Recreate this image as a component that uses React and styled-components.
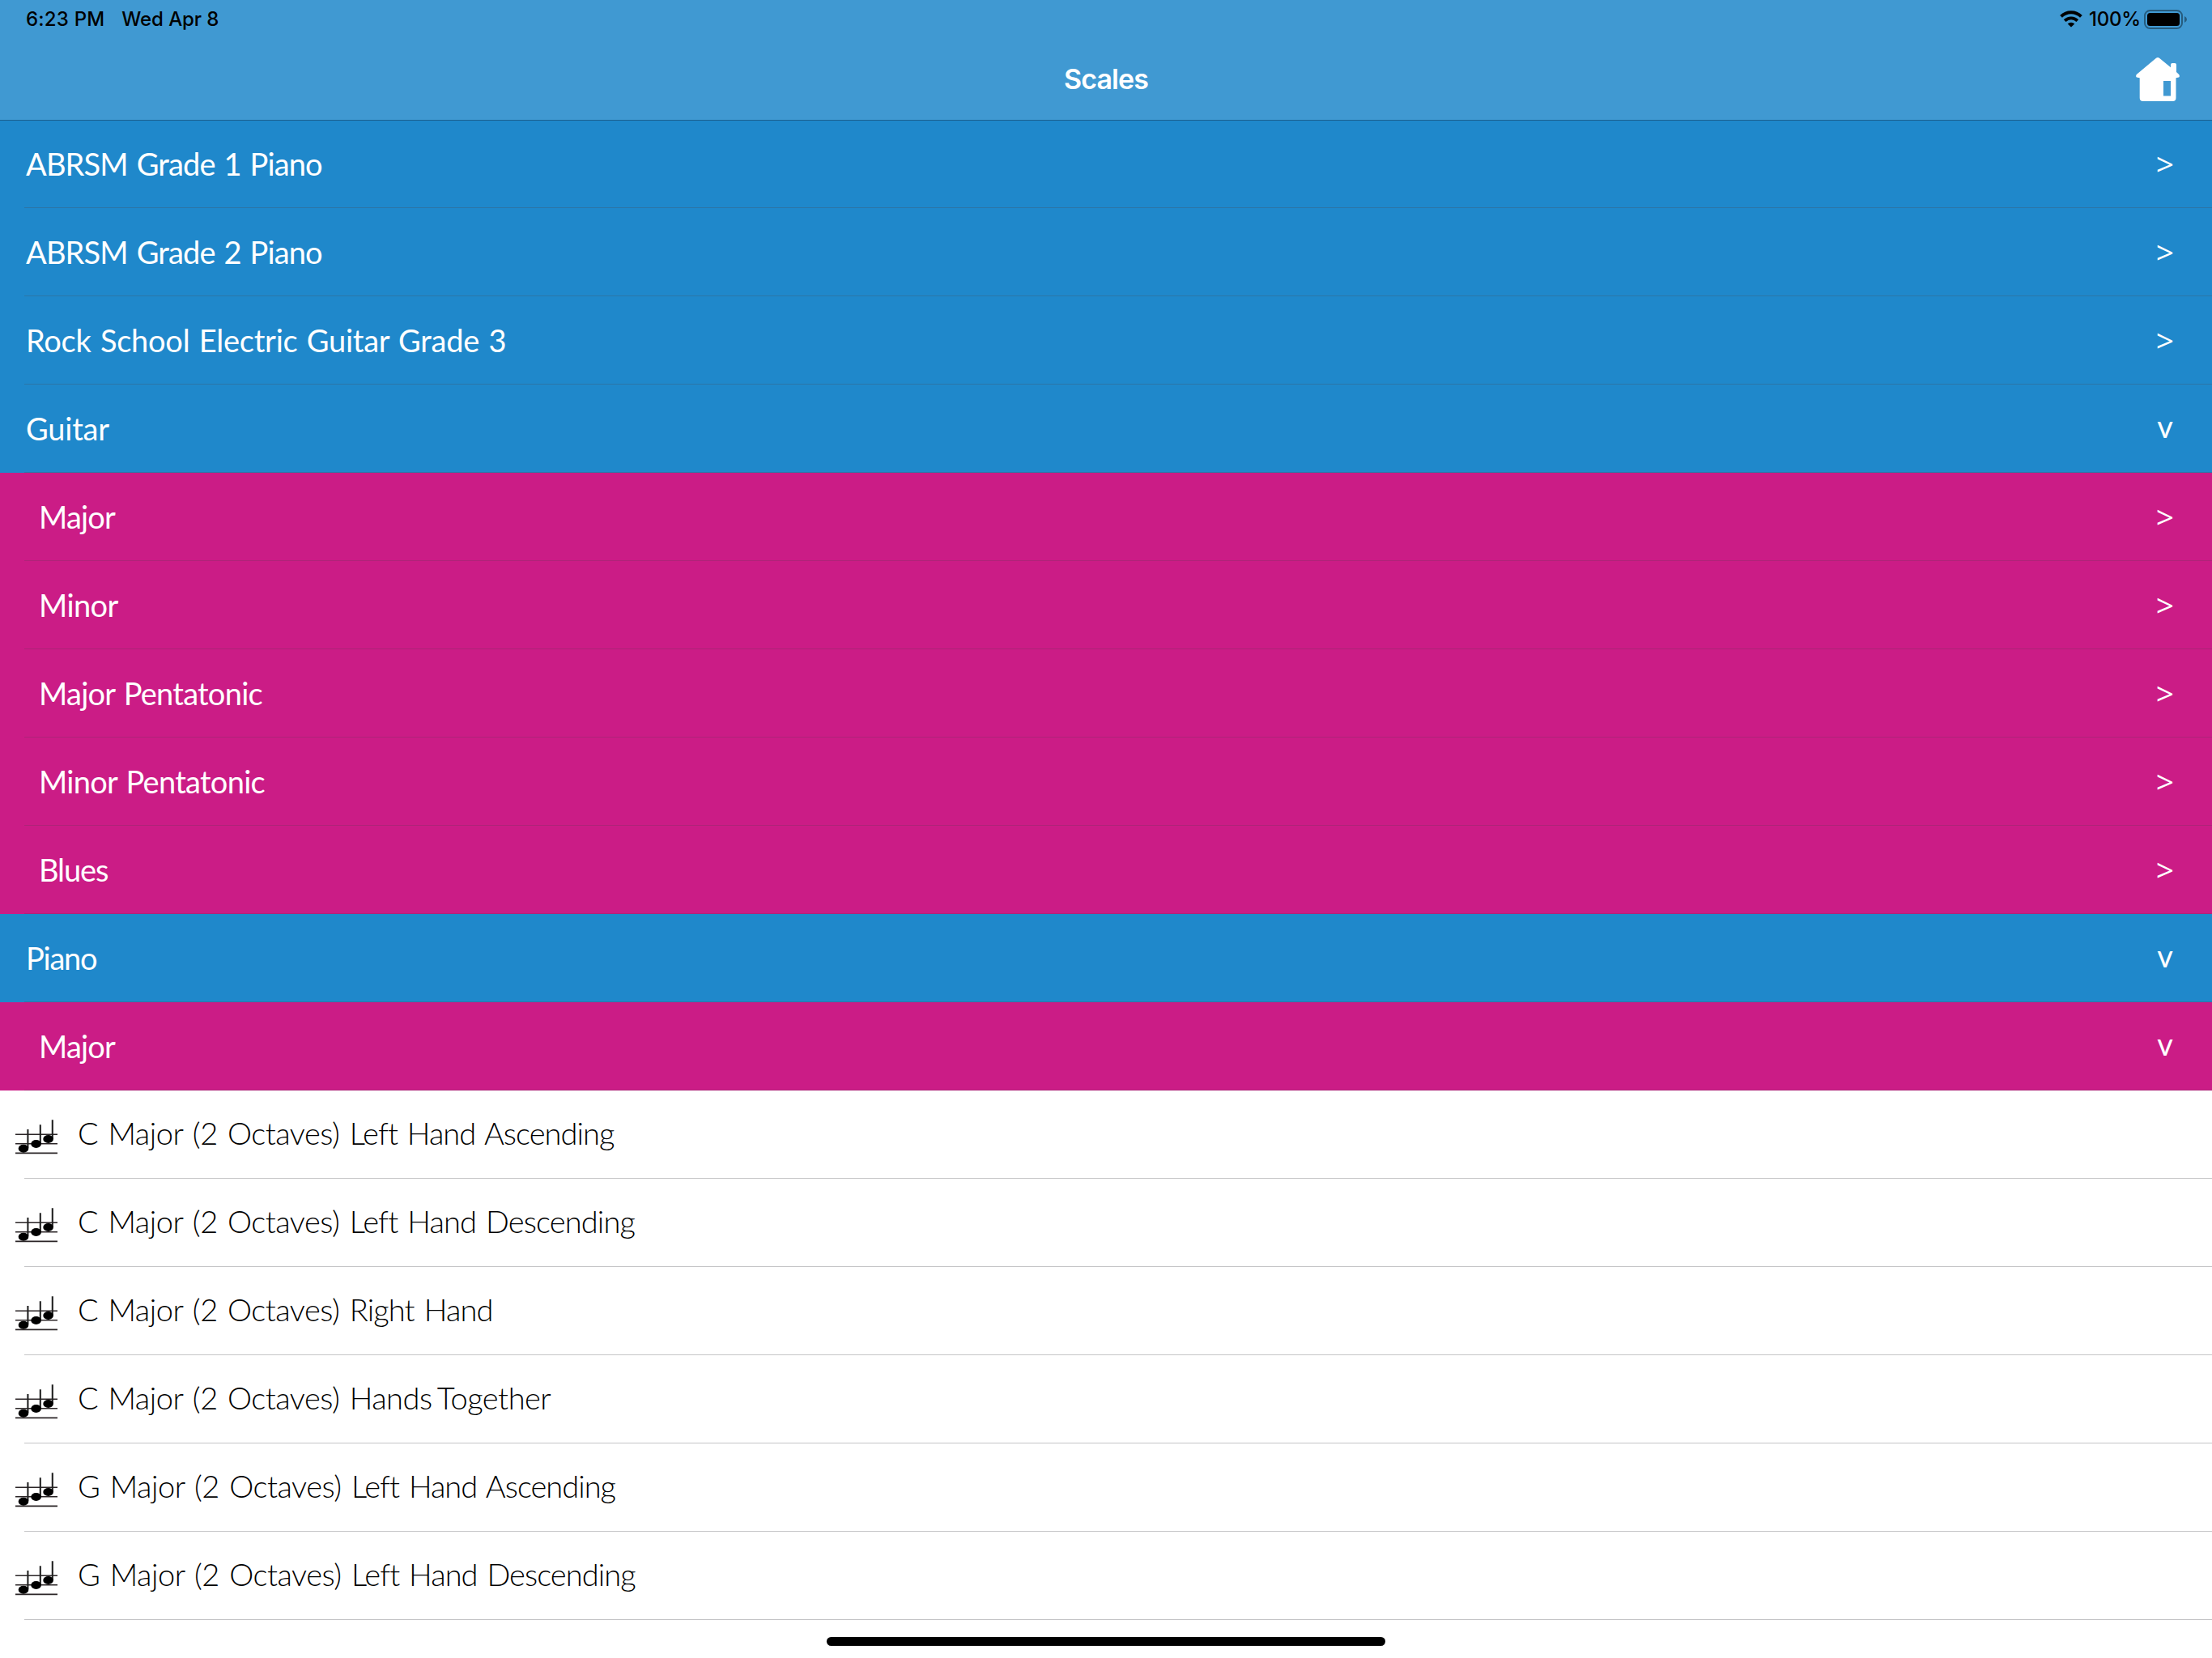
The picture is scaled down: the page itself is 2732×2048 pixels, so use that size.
import React from "react";
import styled, { createGlobalStyle } from "styled-components";

const GlobalStyle = createGlobalStyle`
  *, *::before, *::after { box-sizing: border-box; }
  html, body { margin: 0; height: 100%; background: #fff; }
  body { overflow: hidden; }
`;

const Screen = styled.div`
  display: flex;
  flex-direction: column;
  width: 100%;
  height: 2048px;
  overflow: hidden;
  background: #fff;
  font-family: Lato, "Open Sans", sans-serif;
`;

const Header = styled.header`
  display: flex;
  flex-direction: column;
  flex: none;
  height: 149px;
  margin-bottom: -1px;
  z-index: 1;
  background: #4099d2;
  border-bottom: 1px solid #1b608f;
  font-family: Inter, "Liberation Sans", sans-serif;
`;

const StatusBar = styled.div`
  display: flex;
  flex: none;
  justify-content: space-between;
  align-items: center;
  height: 47px;
  padding: 0 30px 0 32px;
  color: #000;
  font-size: 24px;
  font-weight: 500;
`;

const StatusGroup = styled.div`
  display: flex;
  align-items: center;
  gap: ${(p) => p.$gap}px;
`;

const StatusText = styled.span`
  letter-spacing: ${(p) => p.$tracking || 0}px;
  line-height: 29px;
  white-space: nowrap;
`;

const StatusIcons = styled.svg`
  display: block;
`;

const NavBar = styled.div`
  display: grid;
  flex: none;
  grid-template-columns: 1fr auto 1fr;
  align-items: center;
  height: 100px;
  padding: 0 40px;
`;

const Title = styled.h1`
  grid-column: 2;
  margin: 0;
  color: #fff;
  font-size: 34px;
  font-weight: 600;
  line-height: 102px;
  letter-spacing: -0.9px;
`;

const HomeButton = styled.button`
  justify-self: end;
  display: block;
  width: 54px;
  height: 54px;
  padding: 0;
  border: 0;
  background: none;
`;

const List = styled.ul`
  margin: 0;
  padding: 0;
  list-style: none;
`;

const tones = {
  section: { bg: "#1f88cb", fg: "#fff", line: "#2b76a7", weight: 400, indent: 32, leading: 109 },
  group: { bg: "#cb1c86", fg: "#fff", line: "#ae2378", weight: 400, indent: 48, leading: 109 },
  item: { bg: "#fff", fg: "#000", line: "#c5c5c7", weight: 300, indent: 19, leading: 105 },
};

const Row = styled.li`
  display: flex;
  align-items: center;
  height: 109px;
  padding: 0 48px 0 ${(p) => tones[p.$tone].indent}px;
  color: ${(p) => tones[p.$tone].fg};
  background:
    linear-gradient(${(p) => tones[p.$tone].line}, ${(p) => tones[p.$tone].line})
      30px 100% / 100% 1px no-repeat,
    ${(p) => tones[p.$tone].bg};
  font-size: 38px;
  font-weight: ${(p) => tones[p.$tone].weight};
  line-height: ${(p) => tones[p.$tone].leading}px;
`;

const Label = styled.span`
  flex: 1;
  height: 109px;
  white-space: nowrap;
`;

const Phrase = styled.span`
  letter-spacing: ${(p) => p.$tracking}px;
  word-spacing: ${(p) => p.$wordGap}px;
`;

const Disclosure = styled.span`
  width: 20px;
  height: 109px;
  display: flex;
  justify-content: center;
  line-height: ${(p) => (p.$open ? 102 : 107)}px;
  font-family: ${(p) => (p.$open ? "Lato" : '"Open Sans"')}, sans-serif;
  font-size: ${(p) => (p.$open ? 38 : 39)}px;
`;

const NotesIcon = styled.svg`
  flex: none;
  width: 52px;
  height: 44px;
  margin: 4px 25px 0 0;
`;

const HomeIndicator = styled.div`
  position: absolute;
  left: 1021px;
  top: 2022px;
  width: 690px;
  height: 11px;
  border-radius: 6px;
  background: #000;
`;

const rows = [
  { tone: "section", text: "ABRSM Grade 1 Piano", tracking: -0.85, wordGap: 2 },
  { tone: "section", text: "ABRSM Grade 2 Piano", tracking: -0.85, wordGap: 2 },
  { tone: "section", text: "Rock School Electric Guitar Grade 3", tracking: -0.26, wordGap: 2 },
  { tone: "section", text: "Guitar", tracking: -0.2, open: true },
  { tone: "group", text: "Major", tracking: -0.8 },
  { tone: "group", text: "Minor", tracking: -0.6 },
  { tone: "group", text: "Major Pentatonic", tracking: -0.73, wordGap: 2 },
  { tone: "group", text: "Minor Pentatonic", tracking: -0.7, wordGap: 2 },
  { tone: "group", text: "Blues", tracking: -1.1 },
  { tone: "section", text: "Piano", tracking: -1.2, open: true },
  { tone: "group", text: "Major", tracking: -0.8, open: true },
  { tone: "item", scale: "C Major (2 Octaves) ", text: "Left Hand Ascending", tracking: -0.95, wordGap: 2.5 },
  { tone: "item", scale: "C Major (2 Octaves) ", text: "Left Hand Descending", tracking: -0.86, wordGap: 2.5 },
  { tone: "item", scale: "C Major (2 Octaves) ", text: "Right Hand", tracking: -0.85, wordGap: 2.5 },
  { tone: "item", scale: "C Major (2 Octaves) ", text: "Hands Together", tracking: -0.5, wordGap: -2.5 },
  { tone: "item", scale: "G Major (2 Octaves) ", text: "Left Hand Ascending", tracking: -0.98, wordGap: 2.5 },
  { tone: "item", scale: "G Major (2 Octaves) ", text: "Left Hand Descending", tracking: -0.94, wordGap: 2.5 },
];

const Wifi = () => (
  <StatusIcons width="28" height="21" viewBox="0 0 28 21">
    <g fill="none" stroke="#000" strokeWidth="3.9">
      <path d="M1.6 7.4 A17.5 17.5 0 0 1 26.4 7.4" />
      <path d="M6.2 12.6 A11 11 0 0 1 21.8 12.6" />
    </g>
    <path d="M14 20.5 L9.7 16.4 A6.2 6.2 0 0 1 18.3 16.4 Z" />
  </StatusIcons>
);

const Battery = () => (
  <StatusIcons width="54" height="24" viewBox="0 0 54 24">
    <rect x="1" y="1" width="46" height="22" rx="6.5" fill="none" stroke="#265c7e" strokeWidth="2" />
    <rect x="4" y="4" width="40" height="16" rx="3.5" />
    <path d="M50 8 Q53 9.5 53 12 Q53 14.5 50 16 Z" fill="#265c7e" />
  </StatusIcons>
);

const House = () => (
  <svg width="54" height="54" viewBox="0 0 54 54" fill="#fff">
    <path
      fillRule="evenodd"
      d="M25 .8 Q27 -.7 29 .8 L43 12.3 V9 Q43 7 45 7 H48 Q50 7 50 9 V18 L53.2 21 Q54.6 23.2 53 24.6 L49.5 25.2 V50 Q49.5 54 45.5 54 H8.7 Q4.7 54 4.7 50 V25.2 L1 24.6 Q-.6 23.2 .8 21 Z M34 29 V47.5 H43 V29 Z"
    />
  </svg>
);

const Notes = () => (
  <NotesIcon viewBox="0 0 52 44">
    <g stroke="#2b2527" strokeWidth="1.6">
      <path d="M0 19.3 H52 M0 30.7 H52 M0 42.4 H52" />
    </g>
    <g stroke="#222" strokeWidth="2.1">
      <path d="M15.4 13 V36 M30.8 7.3 V31 M45.8 1.3 V25" />
    </g>
    <ellipse cx="10" cy="36.7" rx="6.3" ry="5" />
    <ellipse cx="25.6" cy="31" rx="6.3" ry="5" />
    <ellipse cx="40.6" cy="25" rx="6.3" ry="5" />
  </NotesIcon>
);

export default function App() {
  return (
    <Screen>
      <GlobalStyle />
      <Header>
        <StatusBar>
          <StatusGroup $gap={21}>
            <StatusText $tracking={0.2}>6:23 PM</StatusText>
            <StatusText $tracking={-0.1}>Wed Apr 8</StatusText>
          </StatusGroup>
          <StatusGroup $gap={8}>
            <Wifi />
            <StatusGroup $gap={4}>
              <StatusText $tracking={-0.2}>100%</StatusText>
              <Battery />
            </StatusGroup>
          </StatusGroup>
        </StatusBar>
        <NavBar>
          <Title>Scales</Title>
          <HomeButton aria-label="Home">
            <House />
          </HomeButton>
        </NavBar>
      </Header>
      <List>
        {rows.map((row, i) => (
          <Row key={i} $tone={row.tone}>
            {row.tone === "item" && <Notes />}
            <Label>
              {row.scale && (
                <Phrase $tracking={-0.5} $wordGap={2.5}>
                  {row.scale}
                </Phrase>
              )}
              <Phrase $tracking={row.tracking} $wordGap={row.wordGap || 0}>
                {row.text}
              </Phrase>
            </Label>
            {row.tone !== "item" && (
              <Disclosure $open={row.open}>{row.open ? "v" : ">"}</Disclosure>
            )}
          </Row>
        ))}
      </List>
      <HomeIndicator />
    </Screen>
  );
}
